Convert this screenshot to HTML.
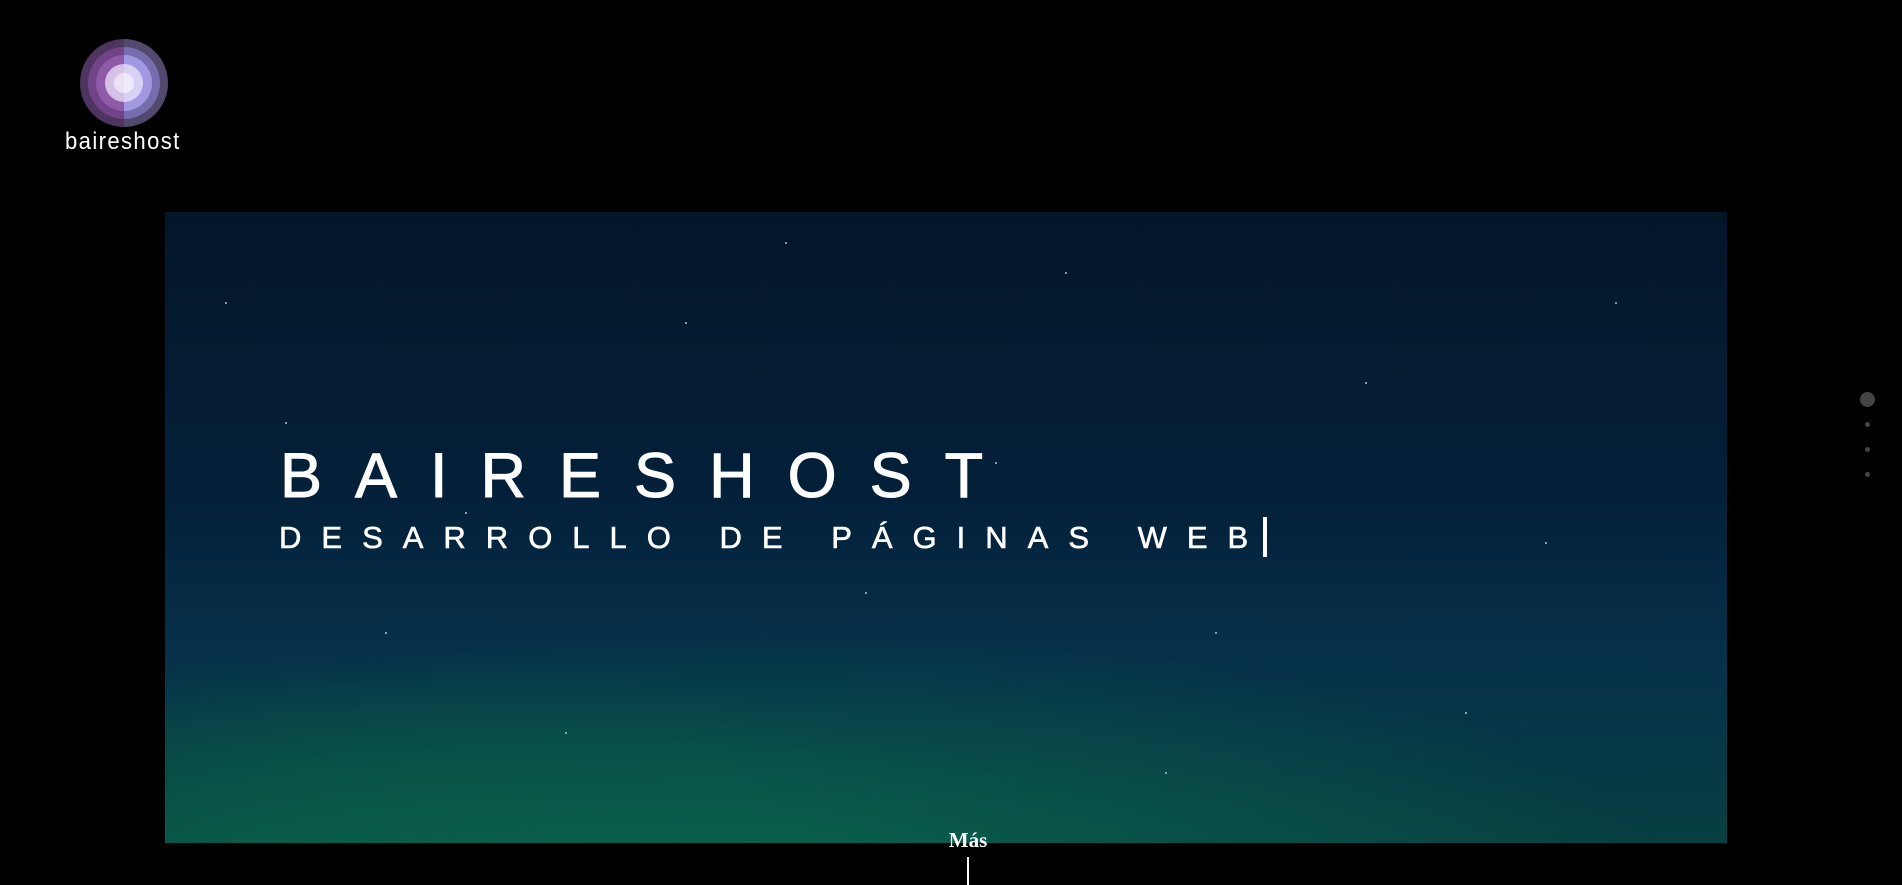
<!DOCTYPE html>
<html><head><meta charset="utf-8"><style>
html,body{margin:0;padding:0;background:#000;width:1902px;height:885px;overflow:hidden;position:relative;font-family:"Liberation Sans",sans-serif}
.hero{position:absolute;left:165px;top:212px;width:1562px;height:631px;overflow:hidden;
background:
radial-gradient(ellipse 900px 240px at 600px 660px,rgba(10,105,78,.8),rgba(10,90,70,0) 100%),
radial-gradient(ellipse 700px 200px at 150px 640px,rgba(10,95,70,.7),rgba(0,0,0,0) 100%),
linear-gradient(180deg,#031628 0%,#04203a 45%,#06304a 70%,#073f42 100%);}
.star{position:absolute;width:2px;height:2px;background:#cfe6ff;border-radius:50%;opacity:.8;}
.t1{position:absolute;left:280px;top:446px;color:#fff;font-size:63px;letter-spacing:33px;line-height:60px;white-space:nowrap;-webkit-text-stroke:1px #fff}
.t2{position:absolute;left:279px;top:522px;color:#fff;font-size:31px;letter-spacing:20px;line-height:32px;white-space:nowrap;-webkit-text-stroke:.6px #fff}
.cur{position:absolute;left:1263px;top:517px;width:4px;height:40px;background:#fff}
.mas{position:absolute;left:943px;top:828px;width:50px;text-align:center;color:#fff;font-family:"Liberation Serif",serif;font-size:21px;font-weight:bold}
.line{position:absolute;left:967px;top:857px;width:2px;height:28px;background:#fff}
.dot{position:absolute;background:#444;border-radius:50%}
</style></head><body>
<svg style="position:absolute;left:79px;top:38px" width="90" height="90" viewBox="0 0 90 90">
<defs><clipPath id="l"><rect x="0" y="0" width="45" height="90"/></clipPath><clipPath id="r"><rect x="45" y="0" width="45" height="90"/></clipPath></defs>
<g clip-path="url(#l)"><circle cx="45" cy="45" r="44" fill="#4e3560"/><circle cx="45" cy="45" r="36" fill="#73438a"/><circle cx="45" cy="45" r="28" fill="#8f5aa8"/><circle cx="45" cy="45" r="19" fill="#d6c1e6"/><circle cx="45" cy="45" r="10" fill="#ece2f6"/></g>
<g clip-path="url(#r)"><circle cx="45" cy="45" r="44" fill="#524a6c"/><circle cx="45" cy="45" r="36" fill="#766dae"/><circle cx="45" cy="45" r="28" fill="#a298e2"/><circle cx="45" cy="45" r="19" fill="#d9d0f6"/><circle cx="45" cy="45" r="10" fill="#efeafc"/></g>
</svg>
<div style="position:absolute;left:65px;top:128px;color:#fff;font-size:24px;letter-spacing:1.5px;transform:scaleX(.92);transform-origin:left;font-weight:300">baireshost</div>
<div class="hero">
<div class="star" style="left:120px;top:210px"></div><div class="star" style="left:300px;top:300px"></div><div class="star" style="left:520px;top:110px"></div><div class="star" style="left:900px;top:60px"></div><div class="star" style="left:1200px;top:170px"></div><div class="star" style="left:1380px;top:330px"></div><div class="star" style="left:1050px;top:420px"></div><div class="star" style="left:700px;top:380px"></div><div class="star" style="left:220px;top:420px"></div><div class="star" style="left:1450px;top:90px"></div><div class="star" style="left:830px;top:250px"></div><div class="star" style="left:400px;top:520px"></div><div class="star" style="left:1000px;top:560px"></div><div class="star" style="left:60px;top:90px"></div><div class="star" style="left:1300px;top:500px"></div><div class="star" style="left:620px;top:30px"></div>
</div>
<div class="t1">BAIRESHOST</div>
<div class="t2">DESARROLLO DE PÁGINAS WEB</div>
<div class="cur"></div>
<div class="mas">Más</div>
<div class="line"></div>
<div class="dot" style="left:1860px;top:392px;width:15px;height:15px"></div>
<div class="dot" style="left:1865px;top:422px;width:5px;height:5px"></div>
<div class="dot" style="left:1865px;top:447px;width:5px;height:5px"></div>
<div class="dot" style="left:1865px;top:472px;width:5px;height:5px"></div>
</body></html>
